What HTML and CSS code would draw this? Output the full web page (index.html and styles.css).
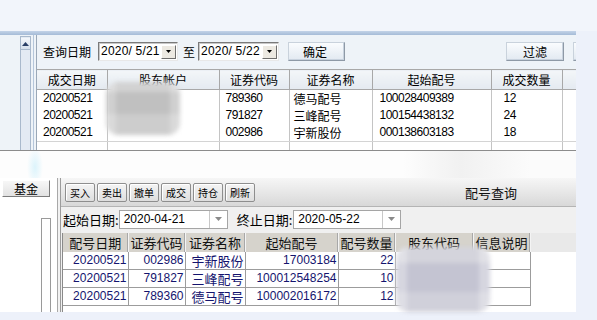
FILE: index.html
```html
<!DOCTYPE html>
<html>
<head>
<meta charset="utf-8">
<link rel="stylesheet" href="styles.css">
</head>
<body>
<div class="screen">
  <div class="topstrip"></div>

  <div class="win1">
    <div class="band"></div>
    <div class="win1-body">
      <div class="side1">
        <div class="vscroll">
          <div class="vs-up"><svg width="7" height="4" viewBox="0 0 7 4"><path d="M0 4 L3.5 0 L7 4 Z" fill="#2a3f66"/></svg></div>
        </div>
        <div class="side1-rule"></div>
      </div>
      <div class="panel1">
        <div class="query">
          <span class="qlbl">查询日期</span>
          <div class="combo"><span class="cv">2020/ 5/21</span><span class="cbtn"><svg width="5" height="3" viewBox="0 0 5 3"><path d="M0 0 H5 L2.5 3 Z" fill="#000"/></svg></span></div>
          <span class="qlbl zhi">至</span>
          <div class="combo combo2"><span class="cv">2020/ 5/22</span><span class="cbtn"><svg width="5" height="3" viewBox="0 0 5 3"><path d="M0 0 H5 L2.5 3 Z" fill="#000"/></svg></span></div>
          <button class="btn btn-ok">确定</button>
          <button class="btn btn-filter">过滤</button>
          <button class="btn btn-more"></button>
        </div>
        <table class="t1">
          <colgroup><col class="w70"><col class="w112"><col class="w70"><col class="w83"><col class="w119"><col class="w71"><col class="w14"></colgroup>
          <thead>
            <tr><th>成交日期</th><th>股东帐户</th><th>证券代码</th><th>证券名称</th><th>起始配号</th><th>成交数量</th><th></th></tr>
          </thead>
          <tbody>
            <tr><td class="n">20200521</td><td></td><td class="n">789360</td><td class="z">德马配号</td><td class="n p7">100028409389</td><td class="n p12">12</td><td></td></tr>
            <tr><td class="n">20200521</td><td></td><td class="n">791827</td><td class="z">三峰配号</td><td class="n p7">100154438132</td><td class="n p12">24</td><td></td></tr>
            <tr class="last"><td class="n">20200521</td><td></td><td class="n">002986</td><td class="z">宇新股份</td><td class="n p7">000138603183</td><td class="n p12">18</td><td></td></tr>
            <tr><td></td><td></td><td></td><td></td><td></td><td></td><td></td></tr>
          </tbody>
        </table>
      </div>
    </div>
  </div>

  <div class="gap"></div>

  <div class="win2">
    <div class="side2">
      <button class="fund">基金</button>
      <div class="side2-box"></div>
    </div>
    <div class="side2-sep"></div>
    <div class="main2">
      <div class="toolbar">
        <button class="tb">买入</button>
        <button class="tb">卖出</button>
        <button class="tb">撤单</button>
        <button class="tb">成交</button>
        <button class="tb">持仓</button>
        <button class="tb">刷新</button>
        <span class="ttl">配号查询</span>
      </div>
      <div class="daterow">
        <span class="dlbl">起始日期:</span>
        <div class="dcombo"><span class="dv">2020-04-21</span><span class="darr"><svg width="7" height="4" viewBox="0 0 7 4"><path d="M0 0 H7 L3.5 4 Z" fill="#8a8a8a"/></svg></span></div>
        <span class="dlbl dlbl2">终止日期:</span>
        <div class="dcombo dcombo2"><span class="dv">2020-05-22</span><span class="darr"><svg width="7" height="4" viewBox="0 0 7 4"><path d="M0 0 H7 L3.5 4 Z" fill="#8a8a8a"/></svg></span></div>
      </div>
      <div class="grid">
        <table class="t2">
          <colgroup><col class="c65"><col class="c57"><col class="c60"><col class="c93"><col class="c57"><col class="c78"><col class="c57"></colgroup>
          <thead>
            <tr><th>配号日期</th><th>证券代码</th><th>证券名称</th><th>起始配号</th><th>配号数量</th><th>股东代码</th><th>信息说明</th></tr>
          </thead>
          <tbody>
            <tr><td>20200521</td><td>002986</td><td class="z">宇新股份</td><td>17003184</td><td>22</td><td></td><td></td></tr>
            <tr><td>20200521</td><td>791827</td><td class="z">三峰配号</td><td>100012548254</td><td>10</td><td></td><td></td></tr>
            <tr><td>20200521</td><td>789360</td><td class="z">德马配号</td><td>100002016172</td><td>12</td><td></td><td></td></tr>
          </tbody>
        </table>
      </div>
    </div>
  </div>

  <div class="blob blob1"></div>
  <div class="blob blob2"></div>
</div>
</body>
</html>
```

FILE: styles.css
```css
html, body {
  margin: 0;
  padding: 0;
}
body {
  width: 597px;
  height: 320px;
  overflow: hidden;
  background: #edf1fa;
  font-family: "Noto Sans CJK SC", sans-serif;
  font-size: 12px;
  color: #000;
}
.screen {
  position: relative;
  width: 597px;
  height: 320px;
  overflow: hidden;
}
.topstrip {
  height: 31px;
  background: #f2f5fb;
}

/* ---------- window 1 ---------- */
.win1 {
  width: 576px;
}
.band {
  height: 4px;
  background: linear-gradient(#c3d3e8, #a5bbd7);
}
.win1-body {
  display: flex;
  height: 115px;
  background: #eef3f8;
  border-bottom: 1px solid #8c8c8c;
  overflow: hidden;
}
.side1 {
  width: 37px;
  flex-shrink: 0;
  display: flex;
}
.vscroll {
  margin-left: 20px;
  margin-top: 1px;
  width: 9px;
  border: 1px solid #a9b9cc;
  border-bottom: none;
  background: #e3eaf3;
}
.vs-up {
  height: 11px;
  display: flex;
  align-items: center;
  justify-content: center;
  background: linear-gradient(#f4f7fb, #d6e0ec);
  border-bottom: 1px solid #a9b9cc;
  margin-top: 1px;
}
.side1-rule {
  margin-left: 2px;
  width: 2px;
  border-left: 1px solid #b5c6da;
  border-right: 1px solid #9aa8b8;
}
.panel1 {
  flex: 1;
  overflow: hidden;
  padding-top: 7px;
}
.query {
  display: flex;
  align-items: center;
  height: 19px;
  padding-left: 6px;
}
.qlbl {
  font-size: 12px;
  line-height: 19px;
  flex-shrink: 0;
}
.zhi {
  margin-left: 5px;
  margin-right: 3px;
}
.combo {
  margin-left: 7px;
  width: 80px;
  height: 19px;
  box-sizing: border-box;
  flex-shrink: 0;
  display: flex;
  align-items: center;
  background: #fff;
  border: 1px solid;
  border-color: #7a7a7a #e8e8e8 #e8e8e8 #7a7a7a;
  box-shadow: inset 1px 1px 0 #c8c8c8;
}
.combo2 {
  margin-left: 0;
  width: 81px;
}
.cv {
  flex: 1;
  white-space: pre;
  font-family: "Liberation Sans", sans-serif;
  font-size: 12px;
  letter-spacing: 0.2px;
  padding-left: 2px;
  line-height: 17px;
}
.cbtn {
  width: 15px;
  height: 14px;
  margin-right: 1px;
  box-sizing: border-box;
  display: flex;
  align-items: center;
  justify-content: center;
  background: #ece9e2;
  border: 1px solid;
  border-color: #fff #6e6e6e #6e6e6e #fff;
}
.btn {
  flex-shrink: 0;
  height: 19px;
  box-sizing: border-box;
  padding: 0;
  font-family: "Noto Sans CJK SC", sans-serif;
  font-size: 12px;
  line-height: 17px;
  color: #000;
  background: linear-gradient(#fafcfe, #e2e9f1);
  border: 1px solid;
  border-color: #c9d2dc #8e99a6 #8e99a6 #c9d2dc;
  box-shadow: inset -1px -1px 0 #c8d2de;
}
.btn-ok {
  width: 57px;
  margin-left: 9px;
  text-align: left;
  padding-left: 14px;
}
.btn-filter {
  width: 58px;
  margin-left: 161px;
}
.btn-more {
  width: 20px;
  margin-left: 9px;
}

.t1 {
  margin-top: 8px;
  border-collapse: collapse;
  table-layout: fixed;
  width: 539px;
  background: #fff;
}
.t1 .w70 { width: 70px; }
.t1 .w112 { width: 112px; }
.t1 .w83 { width: 83px; }
.t1 .w119 { width: 119px; }
.t1 .w71 { width: 71px; }
.t1 .w14 { width: 14px; }
.t1 th {
  height: 19px;
  padding: 0;
  font-weight: normal;
  font-size: 12px;
  line-height: 19px;
  text-align: center;
  background: linear-gradient(#f3f6f9, #e4eaf0);
  border-top: 1px solid #a8a8a8;
  border-right: 1px solid #a8a8a8;
  border-bottom: 1px solid #a8a8a8;
}
.t1 td {
  height: 17px;
  padding: 0 0 0 6px;
  font-size: 12px;
  line-height: 17px;
  border-right: 1px solid #c4c4c4;
  white-space: nowrap;
  overflow: hidden;
}
.t1 tr.last td {
  border-bottom: 1px solid #d4d4d4;
}
.t1 td.n {
  font-family: "Liberation Sans", sans-serif;
  letter-spacing: -0.5px;
}
.t1 td.z {
  padding-left: 4px;
}
.t1 td.p7 { padding-left: 7px; }
.t1 td.p12 { padding-left: 12px; }

/* ---------- gap between windows ---------- */
.gap {
  width: 576px;
  height: 27px;
  background:
    radial-gradient(ellipse 8px 20px at 35px 16px, rgba(170, 230, 250, 0.4), rgba(170, 230, 250, 0) 100%),
    linear-gradient(90deg, #fdfdfd 0%, #fdfdfd 70%, #f1f1f1 80%, #fbfbfb 92%);
}

/* ---------- window 2 ---------- */
.win2 {
  width: 576px;
  height: 134px;
  display: flex;
}
.side2 {
  width: 57px;
  flex-shrink: 0;
  background: #fff;
  border-right: 1px solid #a8a8a8;
  display: flex;
  flex-direction: column;
}
.fund {
  margin: 2px 0 0 2px;
  width: 48px;
  height: 17px;
  padding: 0;
  font-family: "Noto Sans CJK SC", sans-serif;
  font-size: 12px;
  line-height: 15px;
  color: #000;
  background: linear-gradient(#f7f7f7, #e2e2e2);
  border: 1px solid;
  border-color: #fff #7c7c7c #7c7c7c #fff;
}
.side2-box {
  margin: 21px 0 0 41px;
  width: 8px;
  flex: 1;
  border: 1px solid #9a9a9a;
  border-bottom: none;
  background: #fff;
}
.side2-sep {
  width: 2px;
  flex-shrink: 0;
  background: #f2f2f2;
}
.main2 {
  flex: 1;
  display: flex;
  flex-direction: column;
  background: #f0f0f0;
  border-left: 1px solid #9c9c9c;
  overflow: hidden;
}
.toolbar {
  display: flex;
  align-items: flex-start;
  padding: 5px 0 0 4px;
  box-sizing: border-box;
  height: 29px;
  background: linear-gradient(#f6f6f6, #e6e6e6 55%, #d8d8d8);
  border-bottom: 1px solid #b4b4b4;
}
.tb {
  width: 30px;
  height: 19px;
  margin-right: 2px;
  padding: 0;
  flex-shrink: 0;
  font-family: "Noto Sans CJK SC", sans-serif;
  font-size: 10px;
  line-height: 17px;
  color: #000;
  border: 1px solid #8e8e8e;
  border-radius: 2px;
  background: linear-gradient(#f4f4f4, #dedede);
  box-shadow: inset 1px 1px 0 #fff;
}
.ttl {
  margin-left: auto;
  margin-right: 59px;
  margin-top: 1px;
  font-size: 13px;
  line-height: 17px;
  color: #111;
}
.daterow {
  height: 24px;
  display: flex;
  align-items: center;
  padding-left: 2px;
  background: #f0f0f0;
}
.dlbl {
  font-size: 13px;
  line-height: 19px;
  flex-shrink: 0;
  white-space: nowrap;
}
.dlbl2 {
  margin-left: 9px;
  margin-right: 1px;
}
.dcombo {
  width: 109px;
  height: 19px;
  box-sizing: border-box;
  flex-shrink: 0;
  display: flex;
  background: #fff;
  border: 1px solid #a5a5a5;
}
.dcombo2 {
  width: 108px;
}
.dv {
  flex: 1;
  font-family: "Liberation Sans", sans-serif;
  font-size: 12px;
  line-height: 17px;
  padding-left: 4px;
}
.darr {
  width: 17px;
  display: flex;
  align-items: center;
  justify-content: center;
  border-left: 1px solid #c8c8c8;
}
.grid {
  flex: 1;
  margin-top: 2px;
  margin-left: 1px;
  border-left: 1px solid #8a8a8a;
  overflow: hidden;
  background: linear-gradient(#e9e9e9 0, #e9e9e9 19px, #fff 19px);
}
.t2 {
  border-collapse: collapse;
  table-layout: fixed;
  width: 467px;
}
.t2 .c65 { width: 65px; }
.t2 .c57 { width: 57px; }
.t2 .c60 { width: 60px; }
.t2 .c93 { width: 93px; }
.t2 .c78 { width: 78px; }
.t2 th {
  height: 19px;
  padding: 0;
  font-weight: normal;
  font-size: 13px;
  line-height: 19px;
  text-align: center;
  color: #111;
  background: #d6d3cc;
  border-right: 1px solid #f4f4f4;
  box-shadow: inset -2px 0 0 -1px #a8a8a8;
}
.t2 td {
  height: 17px;
  padding: 0 1px 0 0;
  font-family: "Liberation Sans", sans-serif;
  font-size: 12px;
  line-height: 17px;
  text-align: right;
  color: #14146e;
  border-right: 1px solid #9c9c9c;
  border-bottom: 1px solid #9c9c9c;
  white-space: nowrap;
  overflow: hidden;
}
.t2 td.z {
  font-family: "Noto Sans CJK SC", sans-serif;
  font-size: 13px;
}

/* ---------- privacy blur overlays ---------- */
.blob {
  position: absolute;
  border-radius: 12px;
  filter: blur(2px);
}
.blob1 {
  left: 106px;
  top: 82px;
  width: 74px;
  height: 53px;
  background:
    linear-gradient(90deg, rgba(255,255,255,0.25) 0 14%, rgba(0,0,0,0) 14% 86%, rgba(255,255,255,0.25) 86%),
    linear-gradient(#d2d2d2 0 18%, #c0c0c0 18% 60%, #cdcdcd 60% 100%);
}
.blob2 {
  left: 396px;
  top: 247px;
  width: 94px;
  height: 65px;
  background:
    linear-gradient(90deg, rgba(255,255,255,0.3) 0 12%, rgba(0,0,0,0) 12% 88%, rgba(255,255,255,0.3) 88%),
    linear-gradient(#d4d4dc 0 25%, #c4c4d2 25% 70%, #d0d0da 70% 100%);
}
```
